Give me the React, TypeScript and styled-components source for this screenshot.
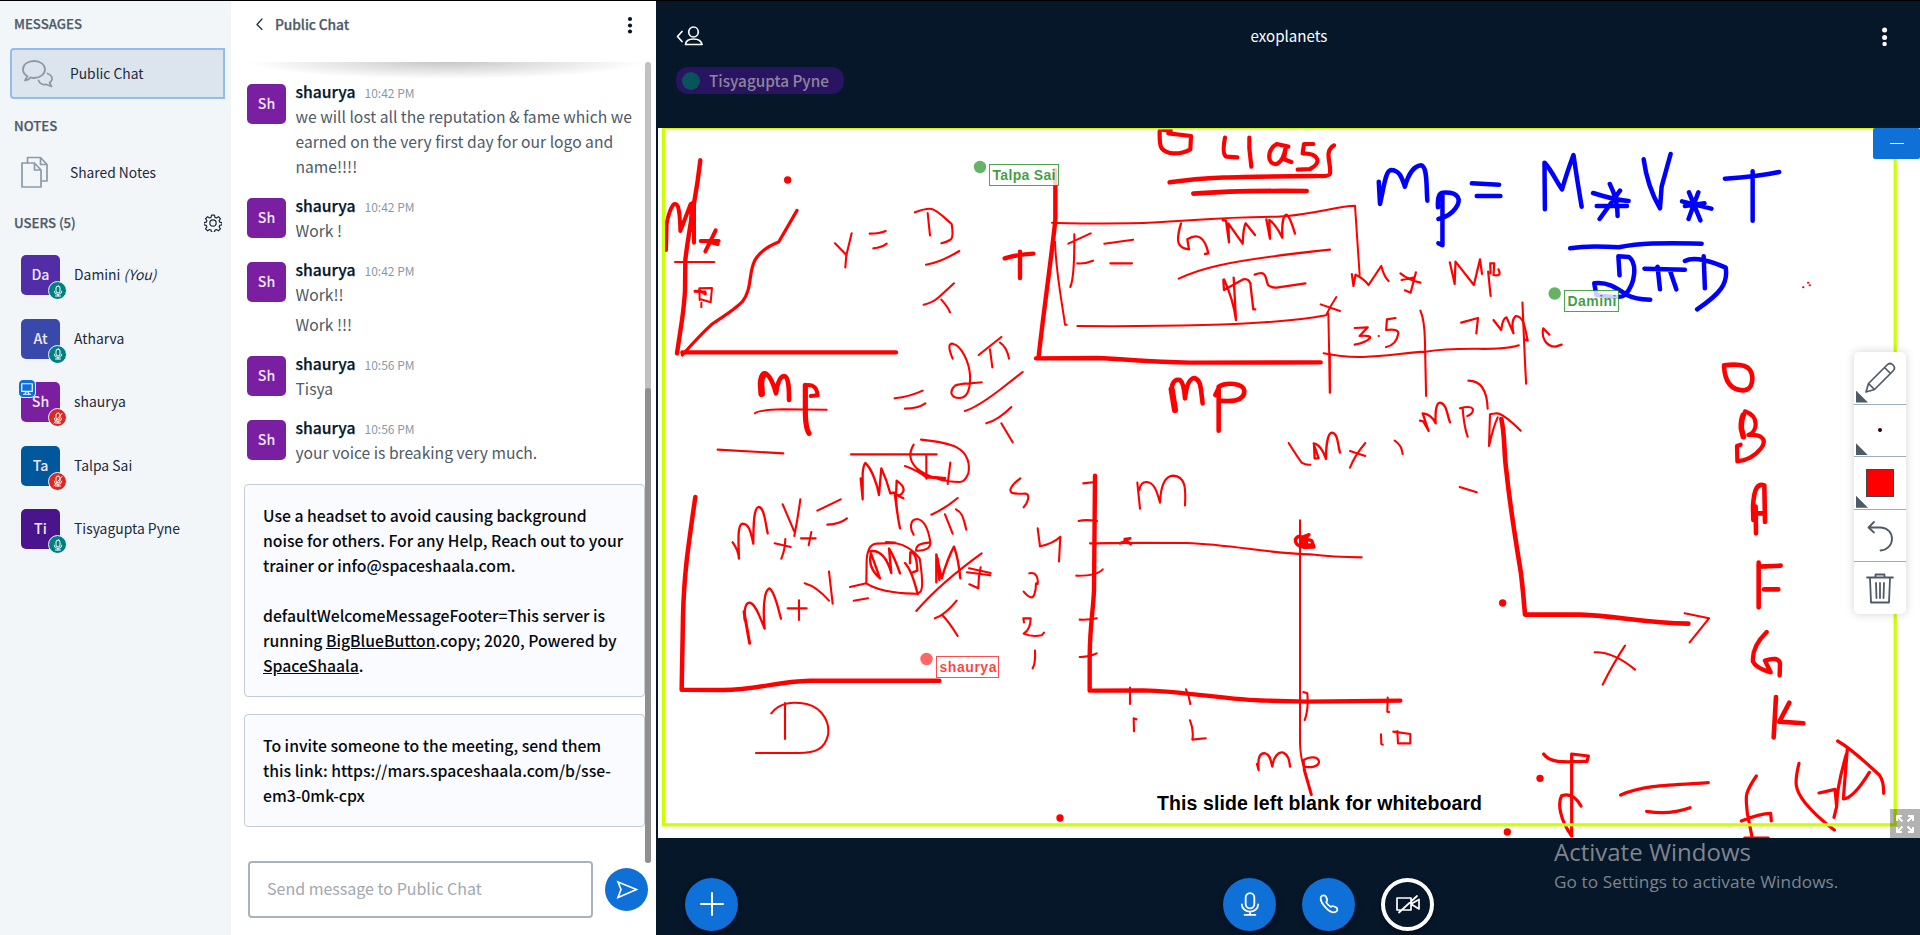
import React from 'react';
import styled, { createGlobalStyle } from 'styled-components';

const Global = createGlobalStyle`
  * { box-sizing: border-box; }
  body { margin: 0; background: #06172a; overflow: hidden; }
  body, input, button { font-family: "Noto Sans CJK SC", "Noto Sans", sans-serif; }
  button { border: 0; padding: 0; background: none; }
`;

const Page = styled.div`
  display: flex;
  width: 1920px;
  height: 935px;
  border-top: 1px solid #000;
  position: relative;
`;

/* ---------- user list ---------- */

const Sidebar = styled.nav`
  width: 231px;
  background: #f3f6f9;
  display: flex;
  flex-direction: column;
`;

const SectionTitle = styled.h2<{ $top: number }>`
  margin: ${(p) => p.$top}px 9px 0 14px;
  height: 20px;
  line-height: 20px;
  font-size: 13.2px;
  font-weight: 500;
  -webkit-text-stroke: 0.25px #4e5a66;
  color: #4e5a66;
  display: flex;
  justify-content: space-between;
  align-items: center;
`;

const NavItem = styled.a<{ $active?: boolean; $top: number }>`
  margin: ${(p) => p.$top}px 6px 0 10px;
  height: 51px;
  padding: 0 0 1px 9px;
  display: flex;
  align-items: center;
  gap: 16px;
  font-size: 13.8px;
  color: #1b2a3a;
  border: 2px solid ${(p) => (p.$active ? '#92bcec' : 'transparent')};
  background: ${(p) => (p.$active ? '#dce4ed' : 'transparent')};
  border-radius: 4px 0 0 4px;
`;

const UserList = styled.ul`
  list-style: none;
  margin: 22px 0 0;
  padding: 0 0 0 21px;
`;

const UserRow = styled.li`
  height: 63.5px;
  display: flex;
  align-items: flex-start;
  gap: 14px;
`;

const UserName = styled.span`
  line-height: 38px;
  font-size: 13.9px;
  color: #1b2a3a;
  i { font-style: oblique; }
`;

const Avatar = styled.div<{ $color: string }>`
  position: relative;
  flex: none;
  width: 39px;
  height: 40px;
  border-radius: 5px;
  background: ${(p) => p.$color};
  color: #f0e8f6;
  font-size: 14.2px;
  font-weight: 500;
  line-height: 38px;
  text-align: center;
`;

const VoiceBadge = styled.span<{ $muted: boolean }>`
  position: absolute;
  right: -7px;
  bottom: -5px;
  width: 19px;
  height: 19px;
  border-radius: 50%;
  border: 1px solid #f3f6f9;
  background: ${(p) => (p.$muted ? '#df2721' : '#008081')};
  display: flex;
  align-items: center;
  justify-content: center;
`;

const PresenterBadge = styled.span`
  position: absolute;
  left: -2px;
  top: -2px;
  width: 16px;
  height: 17px;
  border-radius: 4px;
  border: 1px solid #0f70d7;
  box-shadow: 0 0 0 1px #f3f6f9;
  background: #0f70d7;
  display: flex;
  align-items: center;
  justify-content: center;
`;

/* ---------- chat ---------- */

const Chat = styled.section`
  width: 425px;
  background: #fff;
  display: flex;
  flex-direction: column;
`;

const ChatHeader = styled.header`
  height: 61px;
  padding: 11px 23px 0 25px;
  display: flex;
  align-items: flex-start;
  justify-content: space-between;
`;

const ChatTitle = styled.div`
  display: flex;
  align-items: center;
  gap: 12px;
  height: 25px;
  padding-bottom: 1px;
  font-size: 13.8px;
  letter-spacing: -0.1px;
  font-weight: 500;
  -webkit-text-stroke: 0.25px #4e5a66;
  color: #4e5a66;
  line-height: 22px;
`;

const Scroller = styled.div`
  display: flex;
  height: 800px;
`;

const Messages = styled.div`
  width: 414px;
  padding: 22px 0 0 16px;
  background: radial-gradient(farthest-side at 50% 0, rgba(0, 0, 0, 0.22), rgba(0, 0, 0, 0)) 16px 0 / 398px 17px no-repeat;
`;

const ScrollTrack = styled.div`
  width: 6px;
  height: 801px;
  border-radius: 3px;
  background: #c1c1c1;
  display: flex;
  flex-direction: column;
  justify-content: flex-end;
`;

const ScrollThumb = styled.div`
  height: 475px;
  border-radius: 3px;
  background: #8f8f8f;
`;

const Message = styled.article`
  display: flex;
  gap: 9.5px;
  padding-bottom: 18px;
`;

const MessageHead = styled.div`
  height: 21px;
  line-height: 15px;
  display: flex;
  align-items: baseline;
  gap: 9px;
`;

const Sender = styled.span`
  font-size: 15.7px;
  font-weight: 500;
  -webkit-text-stroke: 0.25px #06172a;
  color: #06172a;
`;

const Time = styled.time`
  font-size: 12px;
  color: #8b9aa8;
`;

const Body = styled.p`
  margin: 0;
  line-height: 24.5px;
  font-size: 15.65px;
  color: #4e5a66;
  white-space: pre;
  & + & { margin-top: 5px; }
`;

const BodyLine = styled.span`
  display: block;
  height: 25px;
`;

const Notice = styled.div`
  margin: 0 0 17px -3px;
  padding: 18px 0 18px 18px;
  border: 1px solid #c2cdd6;
  border-radius: 4px;
  background: #fafbfe;
  font-size: 15.75px;
  font-weight: 500;
  color: #06090f;
`;

const NoticeLine = styled.p`
  margin: 0;
  height: 25px;
  line-height: 25px;
  white-space: pre;
`;

const Composer = styled.form`
  display: flex;
  align-items: center;
  gap: 12px;
  margin: -1px 0 0 17px;
`;

const MessageInput = styled.input`
  width: 345px;
  height: 57px;
  border: 2px solid #a7b3bd;
  border-radius: 4px;
  padding: 0 0 3px 17px;
  font-size: 16px;
  outline: 0;
  &::placeholder { color: #a1a8af; opacity: 1; }
`;

const SendButton = styled.button`
  width: 43px;
  height: 43px;
  border-radius: 50%;
  background: #0f70d7;
  display: flex;
  align-items: center;
  justify-content: center;
`;

/* ---------- meeting ---------- */

const Stage = styled.main`
  width: 1264px;
  background: #06172a;
  display: flex;
  flex-direction: column;
`;

const TopBar = styled.header`
  height: 66px;
  padding: 11px 27px 0 20px;
  display: flex;
  align-items: flex-start;
  justify-content: space-between;
`;

const MeetingTitle = styled.h1`
  margin: 0 0 0 9px;
  line-height: 46px;
  font-size: 15.1px;
  font-weight: 400;
  color: #fff;
`;

const TopIcon = styled.div`
  width: 28px;
  height: 48px;
  display: flex;
  align-items: center;
`;

const TalkingBar = styled.div`
  height: 61px;
  padding-left: 20px;
`;

const Talker = styled.div`
  width: 168px;
  height: 27px;
  border-radius: 12px;
  background: #281460;
  color: #8d859b;
  font-size: 15.3px;
  font-weight: 500;
  display: flex;
  align-items: center;
  gap: 9px;
  padding-left: 6px;
  line-height: 24px;
`;

const TalkDot = styled.span`
  width: 18px;
  height: 18px;
  border-radius: 50%;
  background: #07555b;
`;

const TalkerName = styled.span`
  height: 26px;
`;

const Board = styled.div`
  position: relative;
  margin-left: 2px;
  width: 1262px;
  height: 710px;
  background: #fff;
`;

const Drawing = styled.svg`
  display: block;
`;

const MinimizeButton = styled.button`
  position: absolute;
  right: 0;
  top: 0;
  width: 47px;
  height: 31px;
  border-radius: 2px;
  background: #0f70d7;
  display: flex;
  align-items: center;
  justify-content: center;
  &::after { content: ''; width: 14px; height: 1.4px; background: #fff; }
`;

const FullscreenButton = styled.button`
  position: absolute;
  right: 0;
  bottom: 0;
  width: 30px;
  height: 29px;
  background: rgba(0, 0, 0, 0.3);
  display: flex;
  align-items: center;
  justify-content: center;
`;

const ToolBox = styled.div`
  position: absolute;
  right: 14px;
  top: 224px;
  width: 52px;
  height: 262px;
  border-radius: 5px;
  background: #fff;
  box-shadow: 0 0 10px rgba(0, 0, 0, 0.18);
  display: flex;
  flex-direction: column;
`;

const Tool = styled.button<{ $menu?: boolean }>`
  position: relative;
  flex: 1;
  display: flex;
  align-items: center;
  justify-content: center;
  & + & { border-top: 1px solid #9dafbd; }
  &::after {
    content: '';
    display: ${(p) => (p.$menu ? 'block' : 'none')};
    position: absolute;
    left: 2px;
    bottom: 1px;
    width: 12px;
    height: 12px;
    background: #4e5a66;
    clip-path: polygon(0 0, 100% 100%, 0 100%);
  }
`;

const Swatch = styled.span`
  width: 28px;
  height: 28px;
  background: #f00;
  border: 1px solid #444;
`;

const PenSize = styled.span`
  width: 4px;
  height: 4px;
  border-radius: 50%;
  background: #300;
`;

const ActionBar = styled.footer`
  height: 97px;
  padding: 39.5px 0 0 29px;
  display: grid;
  grid-template-columns: 538px auto;
  align-items: start;
`;

const CallButtons = styled.div`
  display: flex;
  gap: 26px;
`;

const RoundButton = styled.button<{ $ghost?: boolean }>`
  width: 53px;
  height: 53px;
  border-radius: 50%;
  background: ${(p) => (p.$ghost ? '#06172a' : '#0f70d7')};
  border: ${(p) => (p.$ghost ? '4px solid #fff' : '0')};
  box-shadow: 0 2px 5px rgba(0, 0, 0, 0.5);
  display: flex;
  align-items: center;
  justify-content: center;
`;

const Watermark = styled.div`
  position: absolute;
  left: 1554px;
  top: 834px;
  font-family: "Open Sans", "Noto Sans", sans-serif;
  color: #7f858c;
  white-space: nowrap;
`;

const WatermarkTitle = styled.div`
  font-size: 24px;
  line-height: 34px;
`;

const WatermarkText = styled.div`
  font-size: 17.2px;
  letter-spacing: 0.08px;
  line-height: 26px;
`;

/* ---------- icons ---------- */

type IconProps = { size: number; w?: number; color?: string; children: React.ReactNode; box?: string; h?: number };
const Icon = ({ size, h, w = 1.5, color = '#fff', box = '0 0 24 24', children }: IconProps) => (
  <svg width={size} height={h ?? size} viewBox={box} fill="none" stroke={color} strokeWidth={w} strokeLinecap="round" strokeLinejoin="round">
    {children}
  </svg>
);

const MicShape = () => (
  <>
    <rect x="8" y="2" width="8" height="14" rx="4" />
    <path d="M4.5 12.5a7.5 6.5 0 0 0 15 0M12 19v3M7 22h10" />
  </>
);

const Dots = ({ color }: { color: string }) => (
  <svg width="6" height="24" viewBox="0 0 6 24" fill={color}>
    <circle cx="3" cy="7" r="2.1" />
    <circle cx="3" cy="13.500" r="2.1" />
    <circle cx="3" cy="19.500" r="2.1" />
  </svg>
);

const ChatIcon = () => (
  <Icon size={33} h={30} box="0 0 33 30" color="#8b9aa8" w={1.8}>
    <path d="M5 20.5 4 22.5Q8 22 9.5 19.4 11 20 13 20C19.500 20 24 16 24 11.300S19.500 3 13 3 2 6.500 2 11.300C2 14.500 4 17 6.500 18.200Q6 19.500 5 20.500Z" />
    <path d="M26.500 15.500C30 17 31.500 19 31 21.500 30.500 23 29.500 24 28.500 24.700L30.500 28.500 25.500 26.500C21.500 27 18.500 25 17.500 22.500" />
  </Icon>
);

const NotesIcon = () => (
  <Icon size={33} h={32} box="0 0 33 32" color="#8b9aa8" w={1.7}>
    <path d="M1 7H13.500L20 14V31H1ZM13.500 7V14H20" />
    <path d="M6.500 6.500V1.500H19.500L26 8.500V25H20.500M19.500 1.500V8.500H26" />
  </Icon>
);

const GearIcon = () => (
  <Icon size={18} color="#1b2a3a" w={1.6}>
    <circle cx="12" cy="12" r="4.2" />
    <path d="M10 1.500h4l.6 3 2 .8 2.600-1.700 2.700 2.700-1.700 2.600.8 2 3 .6v3l-3 .6-.8 2 1.700 2.600-2.700 2.700-2.600-1.700-2 .8-.6 3h-4l-.6-3-2-.8-2.600 1.700-2.700-2.700 1.700-2.600-.8-2-3-.6v-3l3-.6.8-2L2.100 6.300l2.700-2.700 2.600 1.700 2-.8z" />
  </Icon>
);

/* ---------- data ---------- */

const users = [
  { initials: 'Da', name: 'Damini', you: true, color: '#512da8', muted: false },
  { initials: 'At', name: 'Atharva', color: '#3949ab', muted: false },
  { initials: 'Sh', name: 'shaurya', color: '#7b1fa2', muted: true, presenter: true },
  { initials: 'Ta', name: 'Talpa Sai', color: '#01579b', muted: true },
  { initials: 'Ti', name: 'Tisyagupta Pyne', color: '#4a148c', muted: false },
];

const messages = [
  {
    time: '10:42 PM',
    texts: [['we will lost all the reputation & fame which we', 'earned on the very first day for our logo and', 'name!!!!']],
  },
  { time: '10:42 PM', texts: [['Work !']] },
  { time: '10:42 PM', texts: [['Work!!'], ['Work !!!']] },
  { time: '10:56 PM', texts: [['Tisya']] },
  { time: '10:56 PM', texts: [['your voice is breaking very much.']] },
];

type Layer = { t: string; color?: string; strokes: [number, string][]; dots?: [number, number, number][] };

// Pen strokes, grouped by the board area they belong to: [pen width, path].
const layers: Layer[] = [
  {
    t: 'translate(650 120) scale(.33333)',
    dots: [[413, 180, 11]],
    strokes: [
      [4.4, 'M151 121Q143 190 132 250Q110 380 106 420L105 510Q103 550 96 600L81 700M97 697L738 697'],
      [4, 'M48 390L50 310Q58 270 70 254Q78 248 84 260Q90 280 91 333L122 252L132 247L132 368M124 255L124 330'],
      [4, 'M152 363L206 363M197 331L166 394M185 367L203 372'],
      [2, 'M75 426L193 426M149 540L148 505L186 504L182 547L152 538M154 548L154 562'],
      [3, 'M135 514L165 516L166 522L148 512'],
      [3.2, 'M97 705Q150 645 185 613C220 588 250 573 277 545C308 505 294 460 315 420C330 395 350 380 386 366L441 271'],
      [6.6, 'M335 821L333 790Q334 770 342 764'],
      [4.6, 'M333 790Q334 758 346 760C360 766 370 790 378 820Q385 770 402 768Q418 768 417 840'],
      [5.2, 'M466 796L466 880Q467 925 477 940'],
      [4, 'M466 796Q500 790 503 826L482 828'],
      [2, 'M315 880Q325 870 400 868L530 869'],
      [2.1, 'M555 370L590 406M605 340L589 406L586 442M659 341Q690 341 707 333M670 385Q695 383 710 371'],
      [2.1, 'M795 277Q830 264 845 267C865 272 890 300 905 312Q912 355 900 360Q890 366 874 370M833 279L840 346M828 434Q870 428 928 393M821 554Q850 547 868 530L912 490M874 539Q893 560 900 577'],
      [4.4, 'M1064 415Q1105 403 1150 401M1110 395L1110 474'],
      [2.1, 'M908 716C897 690 893 670 908 671C935 675 958 730 960 765C962 810 950 832 930 834C900 835 898 812 915 797C930 788 970 792 995 787M986 705L1054 651M1020 688L1027 742M1050 668Q1070 680 1077 716M945 873Q980 862 1045 813L1118 756M1009 910Q1045 900 1084 861M1054 910L1088 967'],
      [2.1, 'M734 835Q780 830 818 812M765 866Q805 865 826 850M203 989L400 1000M603 1003L860 1003'],
    ],
  },
  {
    t: 'translate(650 390) scale(.33333)',
    strokes: [
      [2.1, 'M813 149Q890 157 920 172C955 190 960 225 955 250Q945 275 930 276C880 276 830 260 800 235C775 210 778 185 791 164M765 228Q800 240 829 262L886 266M829 197L829 266M835 259L886 264M901 218L893 282'],
      [2.3, 'M632 265L638 328L638 250Q640 225 646 219C665 235 682 285 687 315L694 235Q710 270 721 310L735 308'],
      [2.3, 'M728 308L737 310Q740 370 750 415M734 310L742 370M738 320L740 272Q765 290 760 303Q755 318 740 315L760 325'],
      [4.5, 'M136 321C110 500 102 560 99 680L95 899L220 900C320 900 380 874 480 872L868 872'],
      [2.3, 'M248 457Q265 480 267 506C265 450 262 402 278 401C298 401 303 430 310 461C310 400 312 355 325 351C342 351 345 390 353 430'],
      [2.1, 'M374 460L422 471M406 447Q405 480 394 506M398 343L433 425M451 328Q445 375 433 438M453 445L497 445M484 426L476 466M502 362L572 328M532 404Q570 402 591 385'],
      [2.1, 'M791 434C778 415 780 387 802 387C825 390 835 420 841 455C843 475 825 483 798 482C798 465 810 460 841 457M844 374Q885 356 923 324M885 373L908 431M918 358C938 368 940 385 949 419'],
      [3, 'M282 665L299 760'],
      [2.3, 'M284 690C282 650 288 638 300 638C320 645 332 690 344 716C338 660 342 600 358 595C375 605 385 660 393 686'],
      [2.1, 'M413 655L470 655M447 631L447 690M464 580Q500 590 537 632M537 545L548 641M600 591L649 580M611 632L654 625'],
      [2.1, 'M649 580L650 510C652 480 660 462 680 461L735 459C770 465 790 480 809 505Q822 590 812 604Q805 613 790 611C720 609 680 600 649 580'],
      [2.4, 'M690 565L663 490C658 510 660 540 690 565M658 484C690 478 710 500 724 549L717 475Q735 505 750 550M765 519Q785 540 803 612M780 520L781 487Q800 485 802 542L788 547'],
      [2.1, 'M799 663Q870 580 995 490M708 456L735 458M951 547L1021 556M957 535L1022 549M992 532Q985 560 985 595L958 583M855 685Q885 675 920 632M877 675Q900 700 923 738'],
      [2.4, 'M859 577L859 493L875 565Q895 500 912 470Q925 505 931 565M863 505L868 570'],
      [2.1, 'M364 970C390 935 430 935 470 942C520 955 540 1000 534 1035C525 1075 500 1090 440 1089L318 1089M405 939L405 1047'],
    ],
  },
  {
    t: 'translate(1000 390) scale(.33333)',
    dots: [[180, 1284, 11]],
    strokes: [
      [2.1, 'M61 265C35 285 25 300 35 308Q45 312 78 311C92 315 82 340 71 352M113 415L120 469Q160 460 181 440L177 514M88 550C110 545 115 565 113 582L108 580C108 610 100 622 95 622Q85 622 71 605M72 697L70 685L92 685C92 700 90 720 71 731Q95 742 125 736L132 728M105 782Q107 820 98 835'],
      [4.4, 'M285 257L282 600C280 660 270 700 269 800L269 902L430 901C560 904 680 930 800 932L920 935L1201 932'],
      [2.1, 'M250 280L285 276M236 393Q255 388 291 393M270 460L285 460M229 557Q290 558 308 538M239 689Q270 690 290 685M239 801Q265 802 290 790'],
      [2.1, 'M285 460Q360 458 560 459C700 464 800 490 930 493Q1000 502 1085 502M412 278L420 356M418 300Q422 275 440 276C465 278 472 310 480 338C482 290 495 258 520 257C555 260 558 290 555 346'],
      [2.6, 'M360 460L391 445L374 447L392 463'],
      [2, 'M900 391L900 1060Q902 1110 915 1140'],
      [3.4, 'M905 470Q885 465 886 448Q895 434 906 442L927 434L914 446L935 452L942 471L912 472L920 455L905 450L903 462L930 465'],
      [2.1, 'M910 906L922 910Q926 960 914 990M390 893L390 942M558 898Q568 920 571 942M1163 923L1162 965L1167 966M402 1024L401 985L409 988M570 991Q582 1020 577 1049L617 1045M1143 1033L1144 1062L1148 1064M1180 1025L1231 1032L1231 1060L1194 1060L1192 1023'],
      [2.3, 'M771 1122L776 1140C772 1100 780 1088 796 1090C812 1094 812 1115 817 1130C820 1100 835 1084 850 1088C865 1095 868 1110 870 1130M912 1140L911 1110C930 1098 955 1100 957 1115C957 1130 930 1134 915 1130'],
      [3, 'M913 1140L934 1214'],
      [2.1, 'M866 159Q895 205 905 218Q918 226 931 224M1050 183L1096 198M1096 159Q1065 195 1050 233M1184 152Q1205 165 1208 192'],
      [2.3, 'M941 160C955 162 970 180 978 207C978 160 985 128 996 128C1015 132 1012 160 1020 188M942 163L944 205L956 205L944 170M1260 92L1270 94L1286 123L1268 70C1285 70 1300 85 1307 100C1305 60 1310 38 1320 38C1340 42 1340 70 1350 97'],
    ],
  },
  {
    t: 'translate(1450 340) scale(.33333)',
    dots: [[158, 789, 11], [270, 1315, 11], [172, 1476, 11]],
    strokes: [
      [2.1, 'M30 205Q60 197 68 206Q72 220 52 228M38 205Q42 260 53 290M55 122Q110 122 113 206M212 272Q160 220 140 220L120 223L117 318Q130 260 143 232M704 820L777 835L719 907M29 441L80 457M434 937Q490 935 555 989M525 917Q490 970 458 1034'],
      [4.6, 'M154 237C166 290 160 330 170 400C180 500 200 620 213 700Q220 760 225 824L390 824C500 828 580 848 715 851'],
      [4.6, 'M822 76Q825 150 880 151C910 150 912 110 900 90Q885 68 822 76'],
      [5.6, 'M880 225Q873 240 874 265L880 290'],
      [4.2, 'M885 214C930 230 922 275 895 285C930 282 955 295 933 325Q905 360 862 364L861 318L872 314'],
      [4.6, 'M918 580L917 500M910 540L909 500C912 440 925 430 943 436L945 546M920 520L945 520M926 668L926 802M926 680L992 677M942 748L985 748M978 1071L971 1192M1018 1088L988 1145L1060 1150'],
      [4.4, 'M950 876Q905 920 909 965Q918 985 962 997L945 962Q985 948 990 970L989 1006'],
      [3.2, 'M281 1242C300 1270 340 1267 411 1264L415 1248L365 1242L365 1488C330 1440 322 1390 335 1367Q370 1355 393 1398M512 1365C580 1335 660 1335 775 1328M590 1414Q660 1425 720 1403M919 1308C880 1365 888 1370 892 1420L907 1495M874 1443Q930 1420 962 1420L964 1443M884 1494L955 1494'],
      [3.2, 'M1047 1270C1032 1330 1035 1350 1065 1388Q1100 1430 1153 1470M1163 1203C1210 1230 1260 1280 1288 1305Q1302 1325 1301 1360M1192 1227L1180 1377Q1210 1375 1258 1297M1190 1240Q1160 1340 1160 1400L1152 1432M1107 1359L1155 1348L1160 1400'],
    ],
  },
  {
    t: 'translate(1030 120) scale(.33333)',
    strokes: [
      [4.4, 'M76 150L76 300C66 400 40 580 26 710M18 715L200 714C300 718 350 726 480 728L872 727'],
      [4.2, 'M389 33Q388 75 395 85C410 105 450 105 481 88L483 48L415 40M400 30L422 32'],
      [4.2, 'M585 53Q575 105 590 110L622 112M658 53L658 85L664 140M775 80L740 72C710 90 710 135 740 132Q760 125 768 78L762 118L784 126M850 72L822 72L818 100C870 100 875 130 840 147L803 149M912 76C880 95 905 130 900 160Q898 170 865 168'],
      [4.6, 'M419 187C520 172 600 170 860 168M490 221Q620 211 830 213'],
      [2, 'M66 308Q140 311 300 310C480 305 520 292 740 290C850 285 920 258 975 257L989 465M75 365C78 460 95 540 105 614L110 614M142 618Q700 622 888 586L895 580L900 817M872 553L930 573M919 531Q900 560 888 586'],
      [2.1, 'M115 371L182 340M133 343Q134 470 121 501M142 430Q165 432 189 422M223 371L309 359M241 430L306 430M446 476C500 450 560 425 900 389'],
      [2.3, 'M453 310C435 370 445 385 477 388L472 358Q520 328 535 400L525 402M578 300L588 302L597 367L595 310L638 371Q640 320 647 310L675 345M709 298L720 356L718 300Q735 310 757 353C755 310 760 285 770 284Q780 290 795 341M580 480L582 510L640 478Q662 475 662 500L670 568L676 568M582 478Q610 540 618 600L611 473M674 464C710 450 705 470 714 495Q725 505 745 502L826 490'],
      [6.2, 'M435 870L425 808'],
      [4.6, 'M425 805C428 780 440 778 450 780Q462 790 465 835C470 790 480 775 493 774C515 780 512 810 518 850M566 932L566 800C590 785 640 790 643 812C645 845 600 845 566 842M556 825L566 805'],
    ],
  },
  {
    t: 'translate(1280 0) scale(.40816 .33333)',
    color: '#00f',
    strokes: [
      [4.5, 'M242 545L245 612C255 560 258 512 272 510C295 510 300 540 306 560C315 520 330 498 345 496C362 498 358 560 361 602M387 622Q385 580 398 578C440 575 445 600 430 625Q415 650 388 657M398 578L398 736L388 730M470 550L537 554M482 588L540 588'],
      [4.5, 'M649 628L648 488C665 510 680 550 691 568Q705 510 719 465Q728 540 739 620M767 579Q820 600 854 603M808 552Q828 600 827 648M833 572L783 657M776 618L850 618M891 478Q900 560 931 625L935 560L957 462M985 604L1057 626M1002 577L1030 661M1025 577L1001 657M992 618L1040 610M1090 536Q1170 530 1223 516M1158 514L1158 662'],
      [4.5, 'M711 745C760 735 780 740 830 742C880 730 930 728 1033 731M832 826L829 769L855 771C875 790 872 850 845 885Q835 897 775 885L770 850C800 845 820 860 850 885Q870 898 907 899M893 806L992 809M925 800L931 868M955 810L971 868M1038 769L1041 865M992 783C1015 768 1060 785 1092 803C1098 850 1080 880 1022 928'],
    ],
  },
  {
    t: 'translate(1280 0) scale(.40816 .33333)',
    dots: [[1282, 862, 3], [1294, 848, 3], [1298, 856, 3], [242, 1008, 3]],
    strokes: [
      [2.2, 'M176 822L180 858L185 824Q205 835 217 855L248 798Q255 830 266 843M295 820Q315 840 344 848M333 817L320 878L306 871M298 840L330 832M416 787L428 852L430 785L475 855L490 778L495 822M510 815L516 888M516 820L515 790L525 790L523 825Q545 830 535 808'],
      [2.2, 'M183 984L215 982L195 1008Q225 1005 220 1015Q210 1028 183 1034M283 954L262 958L260 990Q290 985 290 1000Q285 1035 260 1041M444 968L485 954L481 1000M523 960L542 990Q545 955 555 952L572 1000Q565 960 578 948C600 950 600 990 607 1022L598 1018M660 1004L645 985C640 1010 650 1040 675 1040L690 1034'],
      [2.1, 'M107 1060C200 1085 280 1060 357 1055C430 1040 500 1050 540 1045Q570 1043 585 1036M344 932Q354 960 355 1020L358 1188M594 908L600 1080L603 1151M122 1060L122 1178'],
    ],
  },
];

const cursors = [
  { name: 'Talpa Sai', color: '#008000', cx: 980, cy: 167, x: 989.5, y: 164.5, w: 69, tw: 63 },
  { name: 'Damini', color: '#008000', cx: 1554.7, cy: 293.5, x: 1564.5, y: 290.5, w: 54, tw: 49 },
  { name: 'shaurya', color: '#f00', cx: 926.5, cy: 659, x: 936.5, y: 656.5, w: 62, tw: 57 },
];

const Whiteboard = () => (
  <Drawing width="1262" height="710" viewBox="658 128 1262 710" fill="none" strokeLinecap="round" strokeLinejoin="round">
    <text x="1157" y="809.500" textLength="325" fontFamily="Liberation Sans, Arial, sans-serif" fontWeight="700" fontSize="19.500" fill="#000">
      This slide left blank for whiteboard
    </text>
    {layers.map((l, i) => (
      <g key={i} transform={l.t} stroke={l.color ?? '#f00'}>
        {l.strokes.map(([w, d], j) => (
          <path key={j} d={d} strokeWidth={w} vectorEffect="non-scaling-stroke" />
        ))}
        {l.dots?.map(([x, y, r], j) => (
          <circle key={j} cx={x} cy={y} r={r} fill="#f00" stroke="none" />
        ))}
      </g>
    ))}
    <rect x="663.500" y="127.800" width="1231.700" height="697" stroke="#cf0" strokeWidth="3.200" strokeLinejoin="miter" />
    {cursors.map((c) => (
      <g key={c.name}>
        <circle cx={c.cx} cy={c.cy} r="6.200" fill={c.color} fillOpacity=".6" />
        <rect x={c.x} y={c.y} width={c.w} height="21" fill="#fff" fillOpacity=".8" stroke={c.color} strokeOpacity=".7" strokeLinejoin="miter" />
        <text x={c.x + 3} y={c.y + 15.5} textLength={c.tw} fontFamily="Liberation Sans, Arial, sans-serif" fontWeight="700" fontSize="14" fill={c.color} fillOpacity=".75">
          {c.name}
        </text>
      </g>
    ))}
  </Drawing>
);

export default function App() {
  return (
    <Page>
      <Global />
      <Sidebar>
        <SectionTitle $top={13}>MESSAGES</SectionTitle>
        <NavItem $active $top={14}>
          <ChatIcon />
          Public Chat
        </NavItem>
        <SectionTitle $top={17}>NOTES</SectionTitle>
        <NavItem $top={11}>
          <NotesIcon />
          Shared Notes
        </NavItem>
        <SectionTitle $top={15}>
          USERS (5)
          <GearIcon />
        </SectionTitle>
        <UserList>
          {users.map((u) => (
            <UserRow key={u.name}>
              <Avatar $color={u.color}>
                {u.initials}
                {u.presenter && (
                  <PresenterBadge>
                    <Icon size={14} w={2}>
                      <path d="M3 3h18v13H3zM8 21l3-5M16 21l-3-5M6 21h12" />
                    </Icon>
                  </PresenterBadge>
                )}
                <VoiceBadge $muted={u.muted}>
                  <Icon size={12} w={2}>
                    <MicShape />
                    {u.muted && <path d="M4 22 20 3" />}
                  </Icon>
                </VoiceBadge>
              </Avatar>
              <UserName>
                {u.name}
                {u.you && <i> (You)</i>}
              </UserName>
            </UserRow>
          ))}
        </UserList>
      </Sidebar>

      <Chat>
        <ChatHeader>
          <ChatTitle>
            <Icon size={7} h={12} box="0 0 7 12" color="#1b2a3a" w={1.2}>
              <path d="M6 1 1 6.500 6 11.500" />
            </Icon>
            Public Chat
          </ChatTitle>
          <Dots color="#06172a" />
        </ChatHeader>
        <Scroller>
          <Messages>
            {messages.map((m, i) => (
              <Message key={i}>
                <Avatar $color="#7b1fa2">Sh</Avatar>
                <div>
                  <MessageHead>
                    <Sender>shaurya</Sender>
                    <Time>{m.time}</Time>
                  </MessageHead>
                  {m.texts.map((lines) => (
                    <Body key={lines[0]}>
                      {lines.map((l) => (
                        <BodyLine key={l}>{l}</BodyLine>
                      ))}
                    </Body>
                  ))}
                </div>
              </Message>
            ))}
            <Notice>
              <NoticeLine>Use a headset to avoid causing background</NoticeLine>
              <NoticeLine>noise for others. For any Help, Reach out to your</NoticeLine>
              <NoticeLine>trainer or info@spaceshaala.com.</NoticeLine>
              <NoticeLine />
              <NoticeLine>defaultWelcomeMessageFooter=This server is</NoticeLine>
              <NoticeLine>
                running <u>BigBlueButton</u>.copy; 2020, Powered by
              </NoticeLine>
              <NoticeLine>
                <u>SpaceShaala</u>.
              </NoticeLine>
            </Notice>
            <Notice>
              <NoticeLine>To invite someone to the meeting, send them</NoticeLine>
              <NoticeLine>this link: https://mars.spaceshaala.com/b/sse-</NoticeLine>
              <NoticeLine>em3-0mk-cpx</NoticeLine>
            </Notice>
          </Messages>
          <ScrollTrack>
            <ScrollThumb />
          </ScrollTrack>
        </Scroller>
        <Composer>
          <MessageInput placeholder="Send message to Public Chat" />
          <SendButton type="button">
            <Icon size={22} h={20} box="0 0 22 20" w={1.6}>
              <path d="M2 2 20.500 9.500 2 17.500 5 9.500Z" strokeLinejoin="miter" />
            </Icon>
          </SendButton>
        </Composer>
      </Chat>

      <Stage>
        <TopBar>
          <TopIcon>
            <Icon size={28} h={20} box="0 0 28 20" w={1.7}>
              <path d="M6 5.500 1.500 10.500 6 15.500" />
              <ellipse cx="17.500" cy="6" rx="4.800" ry="5" />
              <path d="M9.500 18.500Q10 13 17.500 13T26 18.500Z" />
            </Icon>
          </TopIcon>
          <MeetingTitle>exoplanets</MeetingTitle>
          <TopIcon>
            <Icon size={28} h={20} box="0 0 28 20" w={0}>
              <g fill="#fff">
                <circle cx="19.600" cy="4" r="2.500" />
                <circle cx="19.600" cy="11.500" r="2.500" />
                <circle cx="19.600" cy="18" r="2.200" />
              </g>
            </Icon>
          </TopIcon>
        </TopBar>
        <TalkingBar>
          <Talker>
            <TalkDot />
            <TalkerName>Tisyagupta Pyne</TalkerName>
          </Talker>
        </TalkingBar>
        <Board>
          <Whiteboard />
          <MinimizeButton />
          <ToolBox>
            <Tool $menu>
              <Icon size={32} h={32} box="0 0 32 32" color="#4e5a66" w={1.7}>
                <path d="M2 30 4.500 21.500 23 3Q26 0 29 3T29 9L10.500 27.500ZM4.500 21.500 10.500 27.500M20.500 5.500 26.500 11.500" />
              </Icon>
            </Tool>
            <Tool $menu>
              <PenSize />
            </Tool>
            <Tool $menu>
              <Swatch />
            </Tool>
            <Tool>
              <Icon size={28} h={32} box="0 0 28 32" color="#4e5a66" w={1.8}>
                <path d="M8 2 2.500 7.500 8 12.500M2.500 7.500H15C22 8 26 13 26 19S21 30 14.500 30.500" />
              </Icon>
            </Tool>
            <Tool>
              <Icon size={30} h={32} box="0 0 30 32" color="#4e5a66" w={1.8}>
                <path d="M2 5.500H28M5 6 6 30.500H24L25 6M10.500 5V2.500H19.500V5M11 11 11.500 26M15 11V26M19 11 18.500 26" />
              </Icon>
            </Tool>
          </ToolBox>
          <FullscreenButton>
            <Icon size={20} box="0 0 20 20" w={2}>
              <path d="M2 7V2H7M2 2 7.500 7.500M13 2H18V7M18 2 12.500 7.500M2 13V18H7M2 18 7.500 12.500M18 13V18H13M18 18 12.500 12.500" strokeLinecap="butt" />
            </Icon>
          </FullscreenButton>
        </Board>
        <ActionBar>
          <RoundButton>
            <Icon size={24} w={2}>
              <path d="M12 1V23M1 12H23" />
            </Icon>
          </RoundButton>
          <CallButtons>
            <RoundButton>
              <Icon size={26} w={1.7}>
                <MicShape />
              </Icon>
            </RoundButton>
            <RoundButton>
              <Icon size={22} w={1.9}>
                <path d="M3 4.500C4.500 2 8 2 9 4.500L10 7.500Q10 9 8.800 10 10.500 13 14 15.200 15.500 13.800 17 14.500L20 15.800C21.500 17 21.500 19.500 19.500 20.500 16.500 22 13 20.500 9.500 17 5.500 13 2 8.500 3 4.500Z" />
              </Icon>
            </RoundButton>
            <RoundButton $ghost>
              <Icon size={26} h={20} box="0 0 26 20" w={1.7}>
                <path d="M2 4H16V16H2ZM16 10 24 5.500V15L16 10M4 18.500 22 2" />
              </Icon>
            </RoundButton>
          </CallButtons>
        </ActionBar>
      </Stage>

      <Watermark>
        <WatermarkTitle>Activate Windows</WatermarkTitle>
        <WatermarkText>Go to Settings to activate Windows.</WatermarkText>
      </Watermark>
    </Page>
  );
}
